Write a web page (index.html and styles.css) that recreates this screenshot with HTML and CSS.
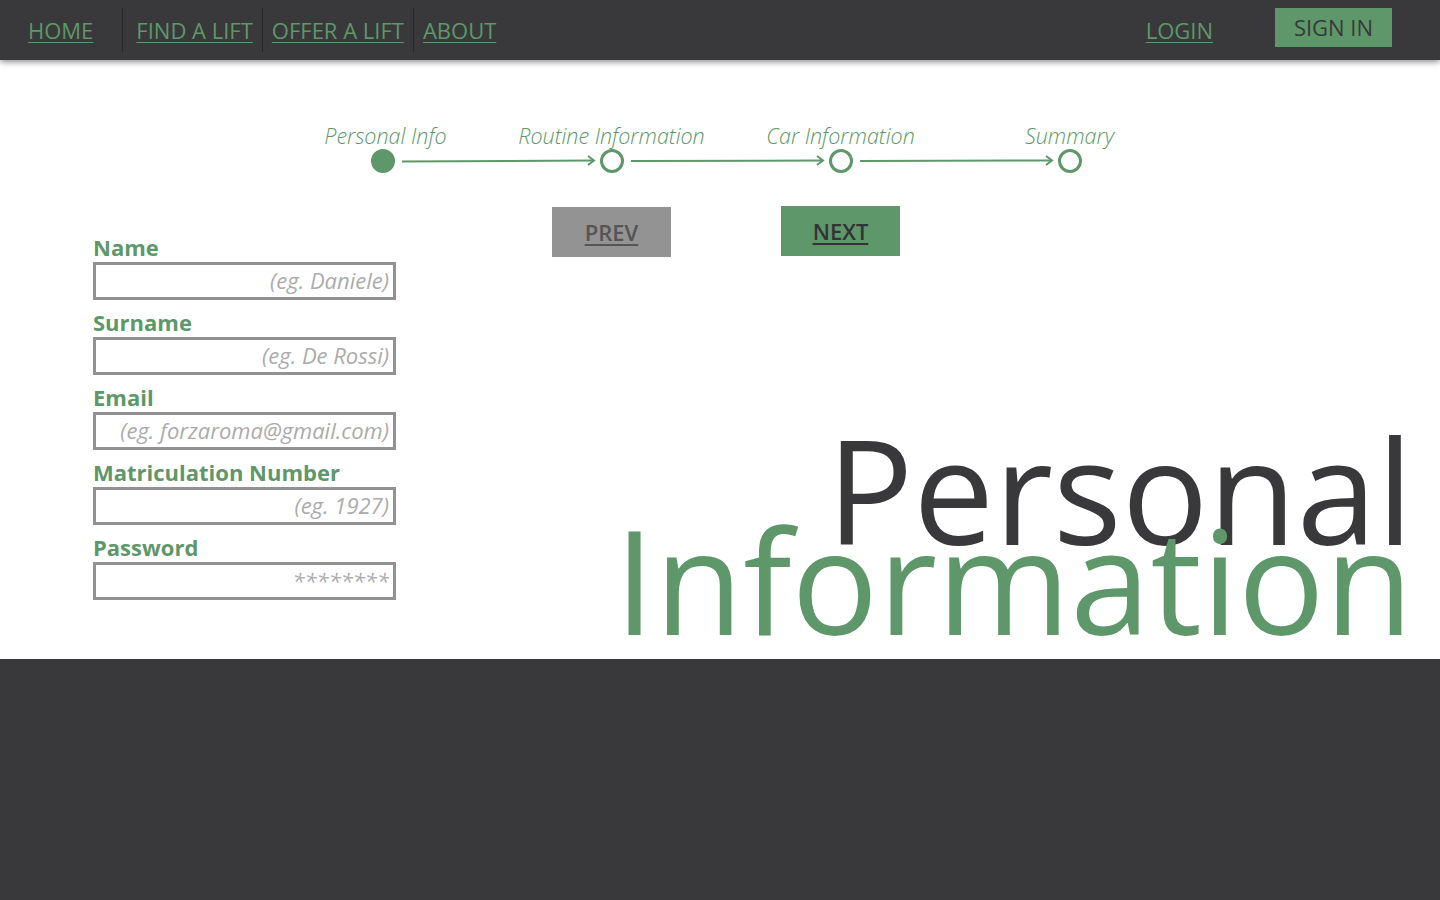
FILE: index.html
```html
<!DOCTYPE html>
<html lang="en">
<head>
<meta charset="utf-8">
<title>Personal Information</title>
<link rel="stylesheet" href="styles.css">
</head>
<body>
<header class="topbar">
  <nav class="nav-left">
    <a class="nav-link nav-home" href="#">HOME</a>
    <span class="nav-item"><a class="nav-link" href="#">FIND A LIFT</a></span>
    <span class="nav-item"><a class="nav-link" href="#">OFFER A LIFT</a></span>
    <span class="nav-item"><a class="nav-link" href="#">ABOUT</a></span>
  </nav>
  <div class="nav-right">
    <a class="nav-link" href="#">LOGIN</a>
    <button class="signin">SIGN IN</button>
  </div>
</header>

<main class="content">
  <section class="stepper">
    <div class="step-labels">
      <span class="step-label">Personal Info</span>
      <span class="step-label">Routine Information</span>
      <span class="step-label">Car Information</span>
      <span class="step-label">Summary</span>
    </div>
    <div class="step-track">
      <span class="dot dot-active"></span>
      <svg class="arrow" width="205" height="12" viewBox="0 0 205 12"><path d="M7 6.5 L199 5.5" stroke="#5e9769" stroke-width="2" fill="none"/><path d="M193 1 L199 5.5 L193 10" stroke="#5e9769" stroke-width="2" fill="none"/></svg>
      <span class="dot"></span>
      <svg class="arrow" width="205" height="12" viewBox="0 0 205 12"><path d="M7 6 L199 5.5" stroke="#5e9769" stroke-width="2" fill="none"/><path d="M193 1 L199 5.5 L193 10" stroke="#5e9769" stroke-width="2" fill="none"/></svg>
      <span class="dot"></span>
      <svg class="arrow" width="205" height="12" viewBox="0 0 205 12"><path d="M7 6 L199 5.5" stroke="#5e9769" stroke-width="2" fill="none"/><path d="M193 1 L199 5.5 L193 10" stroke="#5e9769" stroke-width="2" fill="none"/></svg>
      <span class="dot"></span>
    </div>
  </section>

  <section class="lower">
    <form class="form">
      <label class="field-label" for="name">Name</label>
      <input class="field" id="name" type="text" placeholder="(eg. Daniele)">
      <label class="field-label" for="surname">Surname</label>
      <input class="field" id="surname" type="text" placeholder="(eg. De Rossi)">
      <label class="field-label" for="email">Email</label>
      <input class="field" id="email" type="text" placeholder="(eg. forzaroma@gmail.com)">
      <label class="field-label" for="matr">Matriculation Number</label>
      <input class="field" id="matr" type="text" placeholder="(eg. 1927)">
      <label class="field-label" for="pwd">Password</label>
      <input class="field" id="pwd" type="password" placeholder="********">
    </form>
    <div class="right">
      <div class="buttons">
        <a class="btn btn-prev" href="#">PREV</a>
        <a class="btn btn-next" href="#">NEXT</a>
      </div>
      <h1 class="title"><span class="title-dark">Personal</span><span class="title-green">Information</span></h1>
    </div>
  </section>
</main>

<footer class="footer"></footer>
</body>
</html>
```
FILE: styles.css
```css
* { box-sizing: border-box; }

html, body {
  margin: 0;
  padding: 0;
  height: 100%;
}

body {
  font-family: "Open Sans", "Liberation Sans", sans-serif;
  background: #39393b;
  display: flex;
  flex-direction: column;
}

.topbar {
  height: 60px;
  background: #39393b;
  display: flex;
  align-items: center;
  justify-content: space-between;
  box-shadow: 0 2px 6px rgba(0, 0, 0, 0.45);
  position: relative;
  z-index: 2;
  flex: none;
}

.nav-left {
  display: flex;
  align-items: stretch;
  height: 44px;
  padding-left: 28px;
  align-self: flex-start;
  margin-top: 8px;
}

.nav-link {
  font-size: 22px;
  color: #5e9769;
  text-decoration: underline;
  text-underline-offset: 3px;
  text-decoration-thickness: 1px;
  line-height: 44px;
}

.nav-home {
  margin-right: 29px;
}

.nav-item {
  display: flex;
  border-left: 1px solid #262628;
  padding: 0 9px 0 9px;
}

.nav-item:nth-child(2) { padding-left: 13px; }

.nav-right {
  display: flex;
  align-items: flex-start;
  padding-right: 48px;
  gap: 62px;
  align-self: flex-start;
  padding-top: 8px;
}

.nav-right .nav-link {
  line-height: 44px;
}

.signin {
  font-family: "Open Sans", "Liberation Sans", sans-serif;
  font-size: 22px;
  color: #39393b;
  background: #5e9769;
  border: 0;
  height: 39px;
  width: 117px;
  padding: 0;
  line-height: 39px;
}

.content {
  background: #fff;
  height: 599px;
  flex: none;
  display: flex;
  flex-direction: column;
  padding-top: 63px;
}

.stepper {
  margin-left: 268px;
  width: 916px;
}

.step-labels {
  display: flex;
}

.step-label {
  width: 229px;
  text-align: center;
  font-size: 21.5px;
  font-weight: 300;
  font-style: italic;
  color: #5e9769;
  line-height: 26px;
}

.step-label:first-child { padding-left: 6px; }

.step-track {
  display: flex;
  align-items: center;
  padding-left: 103px;
  height: 24px;
}

.dot {
  width: 24px;
  height: 24px;
  border-radius: 50%;
  border: 3px solid #5e9769;
  flex: none;
  background: #fff;
}

.dot-active {
  background: #5e9769;
}

.arrow {
  flex: none;
  display: block;
}

.lower {
  flex: 1;
  display: flex;
}

.form {
  margin-left: 93px;
  margin-top: 61px;
  width: 303px;
  display: flex;
  flex-direction: column;
}

.field-label {
  font-size: 22px;
  font-weight: 700;
  color: #5e9769;
  line-height: 26px;
  margin-bottom: 2px;
}

.field {
  height: 38px;
  border: 3px solid #929292;
  margin: 0 0 9px 0;
  font-family: "Open Sans", "Liberation Sans", sans-serif;
  font-size: 22px;
  text-align: right;
  padding: 0 4px 2px 4px;
  outline: none;
  border-radius: 0;
}

.field::placeholder {
  color: #ababab;
  font-style: italic;
  font-weight: 400;
}

.right {
  flex: 1;
  display: flex;
  flex-direction: column;
  padding-bottom: 35px;
}

.buttons {
  display: flex;
  gap: 110px;
  margin-top: 34px;
  padding-left: 156px;
}

.btn {
  width: 119px;
  height: 50px;
  display: flex;
  align-items: center;
  justify-content: center;
  font-size: 22px;
  font-weight: 600;
  text-decoration: underline;
  text-underline-offset: 3px;
}

.btn-prev {
  background: #939393;
  color: #555;
}

.btn-next {
  background: #5e9769;
  color: #333335;
  margin-top: -1px;
}

.title {
  margin: auto 0 0 0;
  text-align: right;
  font-size: 144px;
  font-weight: 400;
  line-height: 90px;
  padding-right: 27px;
  display: flex;
  flex-direction: column;
  align-items: flex-end;
}

.title-dark { color: #39393b; }
.title-green { color: #5e9769; }

.footer {
  flex: 1;
  background: #39393b;
}
```
